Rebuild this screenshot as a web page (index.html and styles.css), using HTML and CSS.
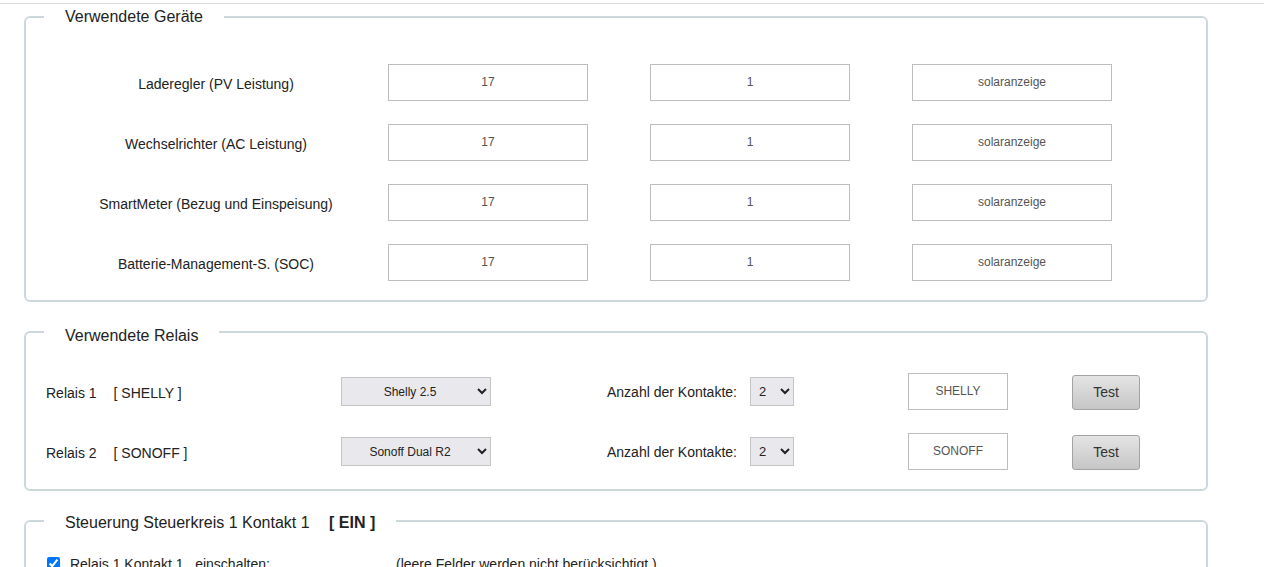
FILE: index.html
```html
<!DOCTYPE html>
<html lang="de">
  <head>
    <meta charset="UTF-8" />
    <meta name="viewport" content="width=device-width, initial-scale=1.0" />
    <title>Solaranzeige Einstellungen</title>
    <link rel="stylesheet" href="styles.css">
  </head>
  <body>
    <div class="topline"></div>
    <div class="container">
      <fieldset class="box box-geraete">
        <legend>Verwendete Geräte</legend>
        <div class="geraete">
          <div class="geraet-name">Laderegler (PV Leistung)</div>
          <input class="field" type="text" value="17" />
          <input class="field" type="text" value="1" />
          <input class="field" type="text" value="solaranzeige" />

          <div class="geraet-name">Wechselrichter (AC Leistung)</div>
          <input class="field" type="text" value="17" />
          <input class="field" type="text" value="1" />
          <input class="field" type="text" value="solaranzeige" />

          <div class="geraet-name">SmartMeter (Bezug und Einspeisung)</div>
          <input class="field" type="text" value="17" />
          <input class="field" type="text" value="1" />
          <input class="field" type="text" value="solaranzeige" />

          <div class="geraet-name">Batterie-Management-S. (SOC)</div>
          <input class="field" type="text" value="17" />
          <input class="field" type="text" value="1" />
          <input class="field" type="text" value="solaranzeige" />
        </div>
      </fieldset>

      <fieldset class="box box-relais">
        <legend>Verwendete Relais</legend>
        <div class="relais">
          <div class="relais-label"><span class="relais-nr">Relais 1</span>[ SHELLY ]</div>
          <div>
            <select class="typ-select">
              <option>Shelly 2.5</option>
              <option>Sonoff Dual R2</option>
            </select>
          </div>
          <div class="kontakte">
            <span>Anzahl der Kontakte:</span>
            <select class="anzahl-select">
              <option>1</option>
              <option selected>2</option>
            </select>
          </div>
          <div><input class="field field-small" type="text" value="SHELLY" /></div>
          <div><button class="btn-test">Test</button></div>

          <div class="relais-label"><span class="relais-nr">Relais 2</span>[ SONOFF ]</div>
          <div>
            <select class="typ-select">
              <option>Shelly 2.5</option>
              <option selected>Sonoff Dual R2</option>
            </select>
          </div>
          <div class="kontakte">
            <span>Anzahl der Kontakte:</span>
            <select class="anzahl-select">
              <option>1</option>
              <option selected>2</option>
            </select>
          </div>
          <div><input class="field field-small" type="text" value="SONOFF" /></div>
          <div><button class="btn-test">Test</button></div>
        </div>
      </fieldset>

      <fieldset class="box box-steuerung">
        <legend>Steuerung Steuerkreis 1 Kontakt 1 <strong class="status">[ EIN ]</strong></legend>
        <div class="steuerung">
          <label class="check"><input type="checkbox" checked /> Relais 1 Kontakt 1 &nbsp;&nbsp;einschalten:</label>
          <div>(leere Felder werden nicht berücksichtigt )</div>
        </div>
      </fieldset>
    </div>
  </body>
</html>
```

FILE: styles.css
```css
body {
  font-family: "Liberation Sans", Arial, sans-serif;
  margin: 0;
  color: #222;
  background-color: #fff;
}

.topline {
  height: 3px;
  border-bottom: 1px solid #dcdcdc;
}

.container {
  width: 1184px;
  margin: 4px 0 0 24px;
}

.box {
  margin: 0;
  padding: 0 18px 19px;
  border: 2px solid #cdd8dc;
  border-radius: 6px;
}

.box legend {
  padding: 0 21px;
  font-size: 16px;
  line-height: 18px;
}

.box-geraete {
  padding-top: 38px;
}

.geraete {
  display: grid;
  grid-template-columns: 344px 262px 262px 200px;
  row-gap: 23px;
  align-items: center;
  justify-items: start;
}

.geraet-name {
  justify-self: stretch;
  padding-top: 3px;
  text-align: center;
  font-size: 14px;
}

.field {
  box-sizing: border-box;
  width: 200px;
  height: 37px;
  margin: 0;
  padding-bottom: 2px;
  border: 1px solid #bdbdbd;
  font-family: "Liberation Sans", Arial, sans-serif;
  font-size: 12px;
  color: #555;
  text-align: center;
}

.field-small {
  width: 100px;
}

.box-relais {
  margin-top: 17px;
  padding-top: 28px;
}

.box-relais legend {
  padding-top: 8px;
}

.relais {
  display: grid;
  grid-template-columns: 297px 266px 301px 164px 68px;
  row-gap: 23px;
  align-items: center;
  font-size: 14px;
}

.relais-label {
  padding-top: 2px;
  padding-left: 2px;
}

.relais-nr {
  margin-right: 17px;
}

.typ-select,
.anzahl-select {
  box-sizing: border-box;
  height: 29px;
  margin: 0;
  border: 1px solid #c4c4c4;
  border-radius: 0;
  background-color: #e9e9ed;
  font-family: "Liberation Sans", Arial, sans-serif;
  font-size: 12px;
  color: #222;
}

.typ-select {
  width: 150px;
  text-align: center;
  text-align-last: center;
}

.anzahl-select {
  width: 44px;
  padding-left: 4px;
  font-size: 13px;
}

.kontakte {
  display: flex;
  align-items: center;
  gap: 13px;
}

.btn-test {
  box-sizing: border-box;
  width: 68px;
  height: 35px;
  margin-top: 1px;
  border: 1px solid #a3a3a3;
  border-radius: 3px;
  background: linear-gradient(#e4e4e4, #c6c6c6);
  font-family: "Liberation Sans", Arial, sans-serif;
  font-size: 14px;
  color: #333;
  cursor: pointer;
}

.status {
  margin-left: 15px;
}

.box-steuerung {
  margin-top: 19px;
  padding-top: 24px;
}

.box-steuerung legend {
  padding-top: 4px;
}

.steuerung {
  display: grid;
  grid-template-columns: 352px 1fr;
  font-size: 14px;
}

.check input {
  margin: 0 6px 0 3px;
  vertical-align: -1px;
}
```
